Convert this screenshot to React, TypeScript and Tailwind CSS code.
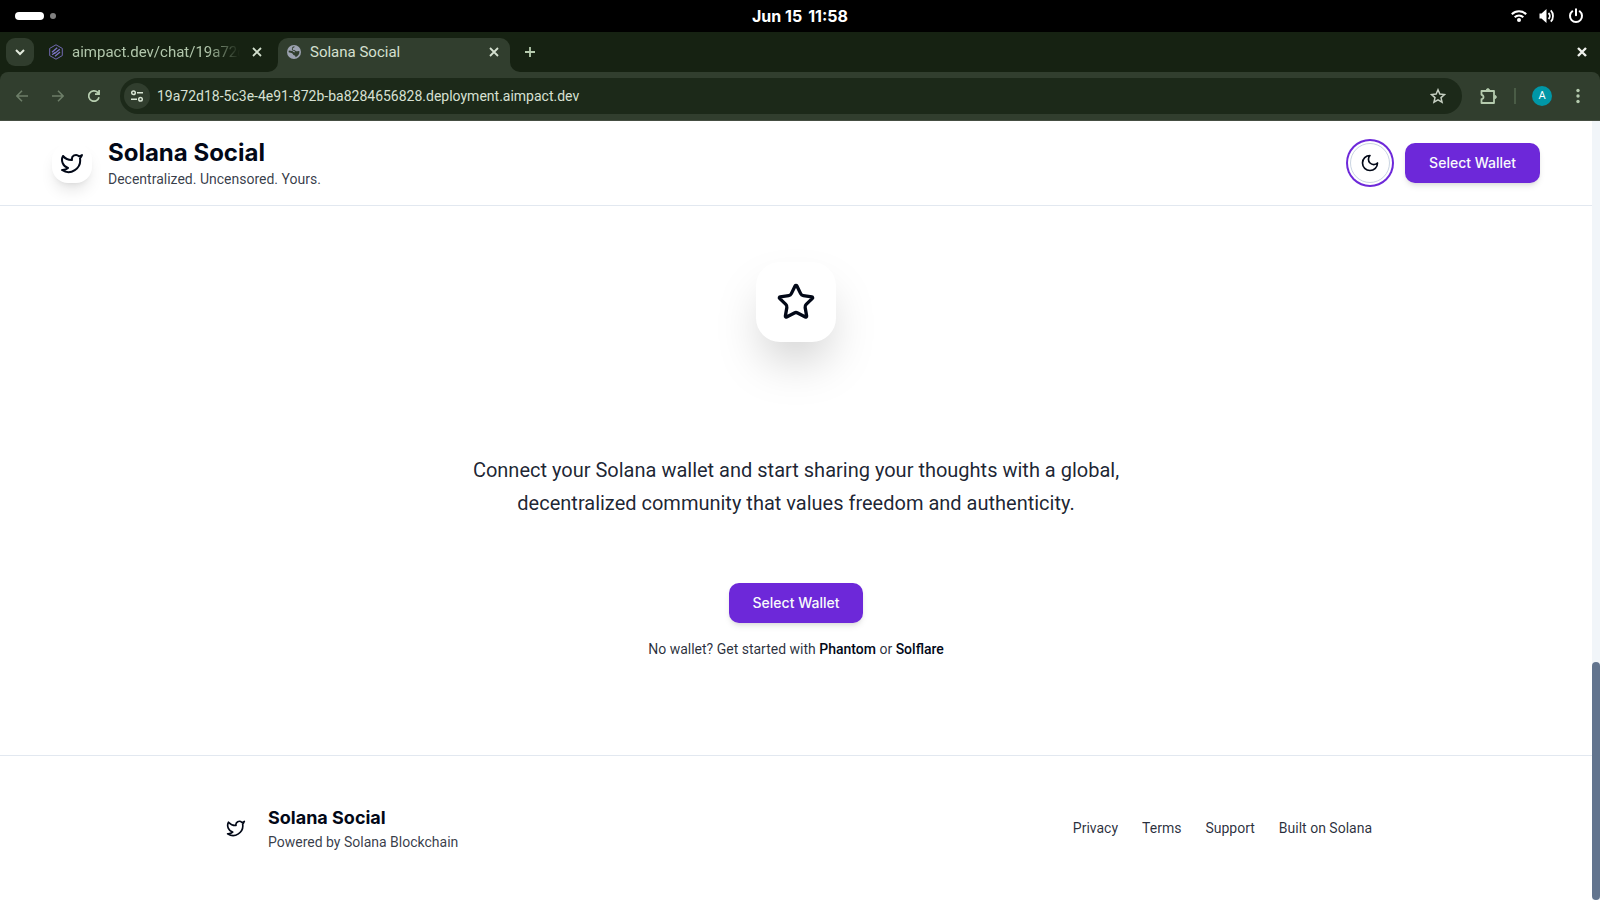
import type { ReactNode } from "react";
import { Star, Twitter } from "lucide-react";

const BODY = "font-[Roboto,sans-serif]";
const HEADING = "font-[Inter,sans-serif]";

function SystemBar() {
  return (
    <div className="grid h-8 grid-cols-3 items-center bg-black px-[15px] text-white">
      <div className="flex items-center gap-1.5">
        <span className="h-2 w-[29px] rounded-full bg-white" />
        <span className="size-1.5 rounded-full bg-[#808080]" />
      </div>
      <time className={`${HEADING} flex justify-center gap-1.5 text-base font-bold`}>
        <span>Jun 15</span>
        <span>11:58</span>
      </time>
      <div className="flex items-center justify-end gap-3">
        <svg className="size-4" viewBox="0 0 16 16" fill="none" stroke="currentColor" strokeWidth="2">
          <path d="M.8 6.2a10.2 10.2 0 0 1 14.4 0" />
          <path d="M3.7 9.2a6 6 0 0 1 8.6 0" />
          <circle cx="8" cy="12" r="2" fill="currentColor" stroke="none" />
        </svg>
        <svg className="h-4 w-[17px]" viewBox="0 0 17 16" fill="none" stroke="currentColor" strokeWidth="1.8">
          <path d="M.5 5.5h2L7.5 1v14l-5-4.500h-2z" fill="currentColor" stroke="none" />
          <path d="M9.500 5c1.700 1.700 1.700 4.300 0 6" />
          <path d="M11.800 2.300c1.500 1.500 2.200 3.500 2.200 5.700s-.7 4.200-2.200 5.700" />
        </svg>
        <svg className="mr-px size-4" viewBox="0 0 16 16" fill="none" stroke="currentColor" strokeWidth="2" strokeLinecap="round">
          <path d="M4.300 3.300a6 6 0 1 0 7.400 0M8 1.200v6" />
        </svg>
      </div>
    </div>
  );
}

function CloseGlyph({ heavy = false }: { heavy?: boolean }) {
  return (
    <svg className="size-2.5" viewBox="0 0 10 10" fill="none" stroke="currentColor" strokeWidth={heavy ? 2.4 : 1.8}>
      <path d="M1 1l8 8M9 1l-8 8" />
    </svg>
  );
}

function TabStrip() {
  return (
    <div className={`${BODY} flex h-10 items-center bg-[#162212] pl-1.5 text-[15px]`}>
      <button aria-label="Search tabs" className="flex size-7 items-center justify-center rounded-[9px] bg-[#303d2d] text-[#e3eadd]">
        <svg className="size-3" viewBox="0 0 12 12" fill="none" stroke="currentColor" strokeWidth="2">
          <path d="M2 4l4 4 4-4" />
        </svg>
      </button>
      <div className="ml-3.5 flex w-[220px] items-center text-[#b1c6ab]">
        <svg className="size-4 shrink-0 text-[#7a72c4]" viewBox="0 0 16 16" fill="none" stroke="currentColor">
          <path d="M8 .8l6.300 3.600v7.200L8 15.200l-6.300-3.600V4.400z" strokeWidth=".9" />
          <path d="M4 8.200l5.200-4.400M4.200 10.800L7 8.500M7 12.200l5-4.200M9 7.500l2.800-2.300M6.500 9.500l2.500-2" strokeWidth="1.400" />
        </svg>
        <span className="ml-2 w-[168px] whitespace-nowrap [mask-image:linear-gradient(to_right,black_80%,transparent)]">
          aimpact.dev/chat/19a72d
        </span>
        <button aria-label="Close aimpact.dev tab" className="ml-3 text-[#d2dfcd]"><CloseGlyph /></button>
      </div>
      <div className="flex self-stretch pt-1.5">
        <svg className="size-2.5 self-end text-[#313e2e]" viewBox="0 0 10 10" fill="currentColor">
          <path d="M10 0v10H0A10 10 0 0 0 10 0z" />
        </svg>
        <div className="flex w-[232px] items-center rounded-t-[10px] bg-[#313e2e] px-[9px] pb-1.5 text-[#d5e0d0]">
          <svg className="size-3.5" viewBox="0 0 14 14">
            <circle cx="7" cy="7" r="7" fill="#9ca2b0" />
            <path d="M7.800 1.600c-.3 1.200-1.600 1-2.100 1.900-.4.8.4 1.600 1.300 1.600 1.100 0 1.300 1 2.200 1.200 1.100.2 1.900-.4 3.100-.2.500 2.700-1.200 5.300-3.800 6.100.1-1.300-.5-1.900-1.500-2-.9-.1-.8-1.300-1.600-1.800C4.400 7.700 3 7.600 1.600 7.300c0-.7.100-1.200.3-1.800 1.300.2 2.600.7 3.600.5.500 1 1.800 1.300 2.700 1.200-.3-1.200-1.600-1.500-2.600-1.800C4.500 5 4.700 3 5.800 1.700c.6-.2 1.300-.2 2-.1z" fill="#313e2e" />
          </svg>
          <span className="ml-[9px]">Solana Social</span>
          <button aria-label="Close Solana Social tab" className="ml-auto pr-0.5"><CloseGlyph /></button>
        </div>
        <svg className="size-2.5 self-end text-[#313e2e]" viewBox="0 0 10 10" fill="currentColor">
          <path d="M0 0v10h10A10 10 0 0 1 0 0z" />
        </svg>
      </div>
      <button aria-label="New tab" className="ml-1 text-[#b5cbae]">
        <svg className="size-3" viewBox="0 0 12 12" fill="none" stroke="currentColor" strokeWidth="1.800">
          <path d="M6 1v10M1 6h10" />
        </svg>
      </button>
      <button aria-label="Close window" className="mr-[13px] ml-auto text-[#f0f3ee]"><CloseGlyph heavy /></button>
    </div>
  );
}

function Toolbar() {
  return (
    <div className="bg-[#162212]">
      <div className={`${BODY} flex h-[49px] items-center rounded-t-lg border-b border-[#454e42] bg-[#313e2e] pr-5 pl-4`}>
        <div className="flex w-[104px] items-center gap-6">
          <button aria-label="Back" className="text-[#6d7e68]">
            <svg className="size-3" viewBox="0 0 12 12" fill="none" stroke="currentColor" strokeWidth="1.500">
              <path d="M12 6H1M6 .8L.9 6 6 11.200" />
            </svg>
          </button>
          <button aria-label="Forward" className="text-[#6d7e68]">
            <svg className="size-3" viewBox="0 0 12 12" fill="none" stroke="currentColor" strokeWidth="1.500">
              <path d="M0 6h11M6 .8L11.100 6 6 11.200" />
            </svg>
          </button>
          <button aria-label="Reload" className="text-[#b8cfb1]">
            <svg className="h-3.5 w-3" viewBox="1 0 12 14" fill="none" stroke="currentColor" strokeWidth="1.700">
              <path d="M12 8.200A5.200 5.200 0 1 1 10.700 3.400l1.500 1.500M12.100 1v4.200H8" />
            </svg>
          </button>
        </div>
        <div className="flex h-9 flex-1 items-center rounded-full bg-[#1c2919] pr-4 pl-1">
          <button aria-label="Site information" className="flex size-[26px] items-center justify-center rounded-full bg-[#313e2e] text-[#d9e5d4]">
            <svg className="size-3" viewBox="0 0 12 12" fill="none" stroke="currentColor" strokeWidth="1.500">
              <circle cx="2.500" cy="2.700" r="1.800" />
              <path d="M6 2.700h6M0 9.300h6" />
              <circle cx="9.500" cy="9.300" r="1.800" />
            </svg>
          </button>
          <input
            aria-label="Address"
            className="ml-[7px] min-w-0 flex-1 bg-transparent text-sm text-[#d7e0d3] outline-none"
            defaultValue="19a72d18-5c3e-4e91-872b-ba8284656828.deployment.aimpact.dev"
          />
          <button aria-label="Bookmark this page" className="text-[#c6cfc2]">
            <svg className="size-4" viewBox="0 0 16 16" fill="none" stroke="currentColor" strokeWidth="1.500">
              <path d="M8 1.800l1.850 4.300 4.650.4-3.500 3.100 1.050 4.600L8 11.800l-4.050 2.400L5 9.600 1.500 6.500l4.650-.4z" />
            </svg>
          </button>
        </div>
        <div className="ml-[18px] flex items-center text-[#b5cbae]">
          <button aria-label="Extensions">
            <svg className="h-[17px] w-[18px]" viewBox="0 0 18 17" fill="none" stroke="currentColor" strokeWidth="1.800" strokeLinejoin="round">
              <path d="M1.500 3h12.500v12h-12.500v-3.800c1.200-.2 2-1.100 2-2.200s-.8-2-2-2.200z" />
              <path d="M6.300 2.200a1.600 1.600 0 0 1 3.200 0zM14.800 7.400a1.600 1.600 0 0 1 0 3.200z" fill="currentColor" strokeWidth=".8" />
            </svg>
          </button>
          <span className="ml-4 h-4 w-0.5 bg-[#4a5c46]" />
          <button aria-label="Profile" className="ml-4 flex size-5 items-center justify-center rounded-full bg-[#0097a7] text-[11px] text-white">A</button>
          <button aria-label="Browser menu" className="ml-6">
            <svg className="h-4 w-1" viewBox="0 0 4 16" fill="currentColor">
              <circle cx="2" cy="2.500" r="1.700" />
              <circle cx="2" cy="8" r="1.700" />
              <circle cx="2" cy="13.500" r="1.700" />
            </svg>
          </button>
        </div>
      </div>
    </div>
  );
}

function WalletButton() {
  return (
    <button className={`${HEADING} h-10 rounded-[10px] bg-[#6d28d9] px-6 text-sm font-medium text-[#f8fafc] shadow-md`}>
      Select Wallet
    </button>
  );
}

function SiteHeader() {
  return (
    <header className="flex items-center justify-between border-b border-slate-200 px-[52px] py-4">
      <div className="flex items-center gap-4">
        <div className="flex size-10 items-center justify-center rounded-2xl bg-white shadow-lg">
          <Twitter className="size-6" />
        </div>
        <div>
          <h1 className={`${HEADING} text-2xl font-bold`}>Solana Social</h1>
          <p className="text-sm text-[#020817]/80">Decentralized. Uncensored. Yours.</p>
        </div>
      </div>
      <div className="flex items-center gap-[15px]">
        <button
          aria-label="Toggle theme"
          className="flex size-10 items-center justify-center rounded-full border border-slate-300 bg-white ring-2 ring-[#6d28d9] ring-offset-2"
        >
          <svg className="size-5" viewBox="0 0 24 24" fill="none" stroke="currentColor" strokeWidth="2" strokeLinecap="round" strokeLinejoin="round">
            <path d="M12 3a6 6 0 0 0 9 9 9 9 0 1 1-9-9Z" />
          </svg>
        </button>
        <WalletButton />
      </div>
    </header>
  );
}

function Strong({ children }: { children: ReactNode }) {
  return <a href="#" className="font-medium text-[#020817]">{children}</a>;
}

function Hero() {
  return (
    <main className="flex flex-col items-center px-6 pt-14 pb-24 text-center">
      <div className="flex size-20 items-center justify-center rounded-3xl bg-white shadow-2xl">
        <Star className="size-10" />
      </div>
      <p className="mt-28 mb-16 max-w-2xl text-xl leading-relaxed text-[#020817]/90">
        Connect your Solana wallet and start sharing your thoughts with a global, decentralized community that values
        freedom and authenticity.
      </p>
      <WalletButton />
      <p className="mt-4 text-sm text-[#020817]/85">
        No wallet? Get started with <Strong>Phantom</Strong> or <Strong>Solflare</Strong>
      </p>
    </main>
  );
}

const footerLinks = ["Privacy", "Terms", "Support", "Built on Solana"];

function SiteFooter() {
  return (
    <footer className="border-t border-slate-200 py-12">
      <div className="mx-auto flex max-w-6xl items-center justify-between">
        <div className="flex items-center gap-4">
          <div className="flex size-8 items-center justify-center">
            <Twitter className="size-5" />
          </div>
          <div>
            <h2 className={`${HEADING} text-lg font-bold`}>Solana Social</h2>
            <p className="text-sm text-[#020817]/80">Powered by Solana Blockchain</p>
          </div>
        </div>
        <nav className="flex gap-6 text-sm text-[#020817]/85">
          {footerLinks.map((label) => (
            <a key={label} href="#">{label}</a>
          ))}
        </nav>
      </div>
    </footer>
  );
}

export default function App() {
  return (
    <div className="flex min-h-screen flex-col bg-white">
      <SystemBar />
      <TabStrip />
      <Toolbar />
      <div className="flex flex-1">
        <div className={`${BODY} min-w-0 flex-1 text-[#020817]`}>
          <SiteHeader />
          <Hero />
          <SiteFooter />
        </div>
        <div className="flex w-2 flex-col justify-end bg-slate-100">
          <div className="h-[238px] rounded-full bg-slate-500" />
        </div>
      </div>
    </div>
  );
}
